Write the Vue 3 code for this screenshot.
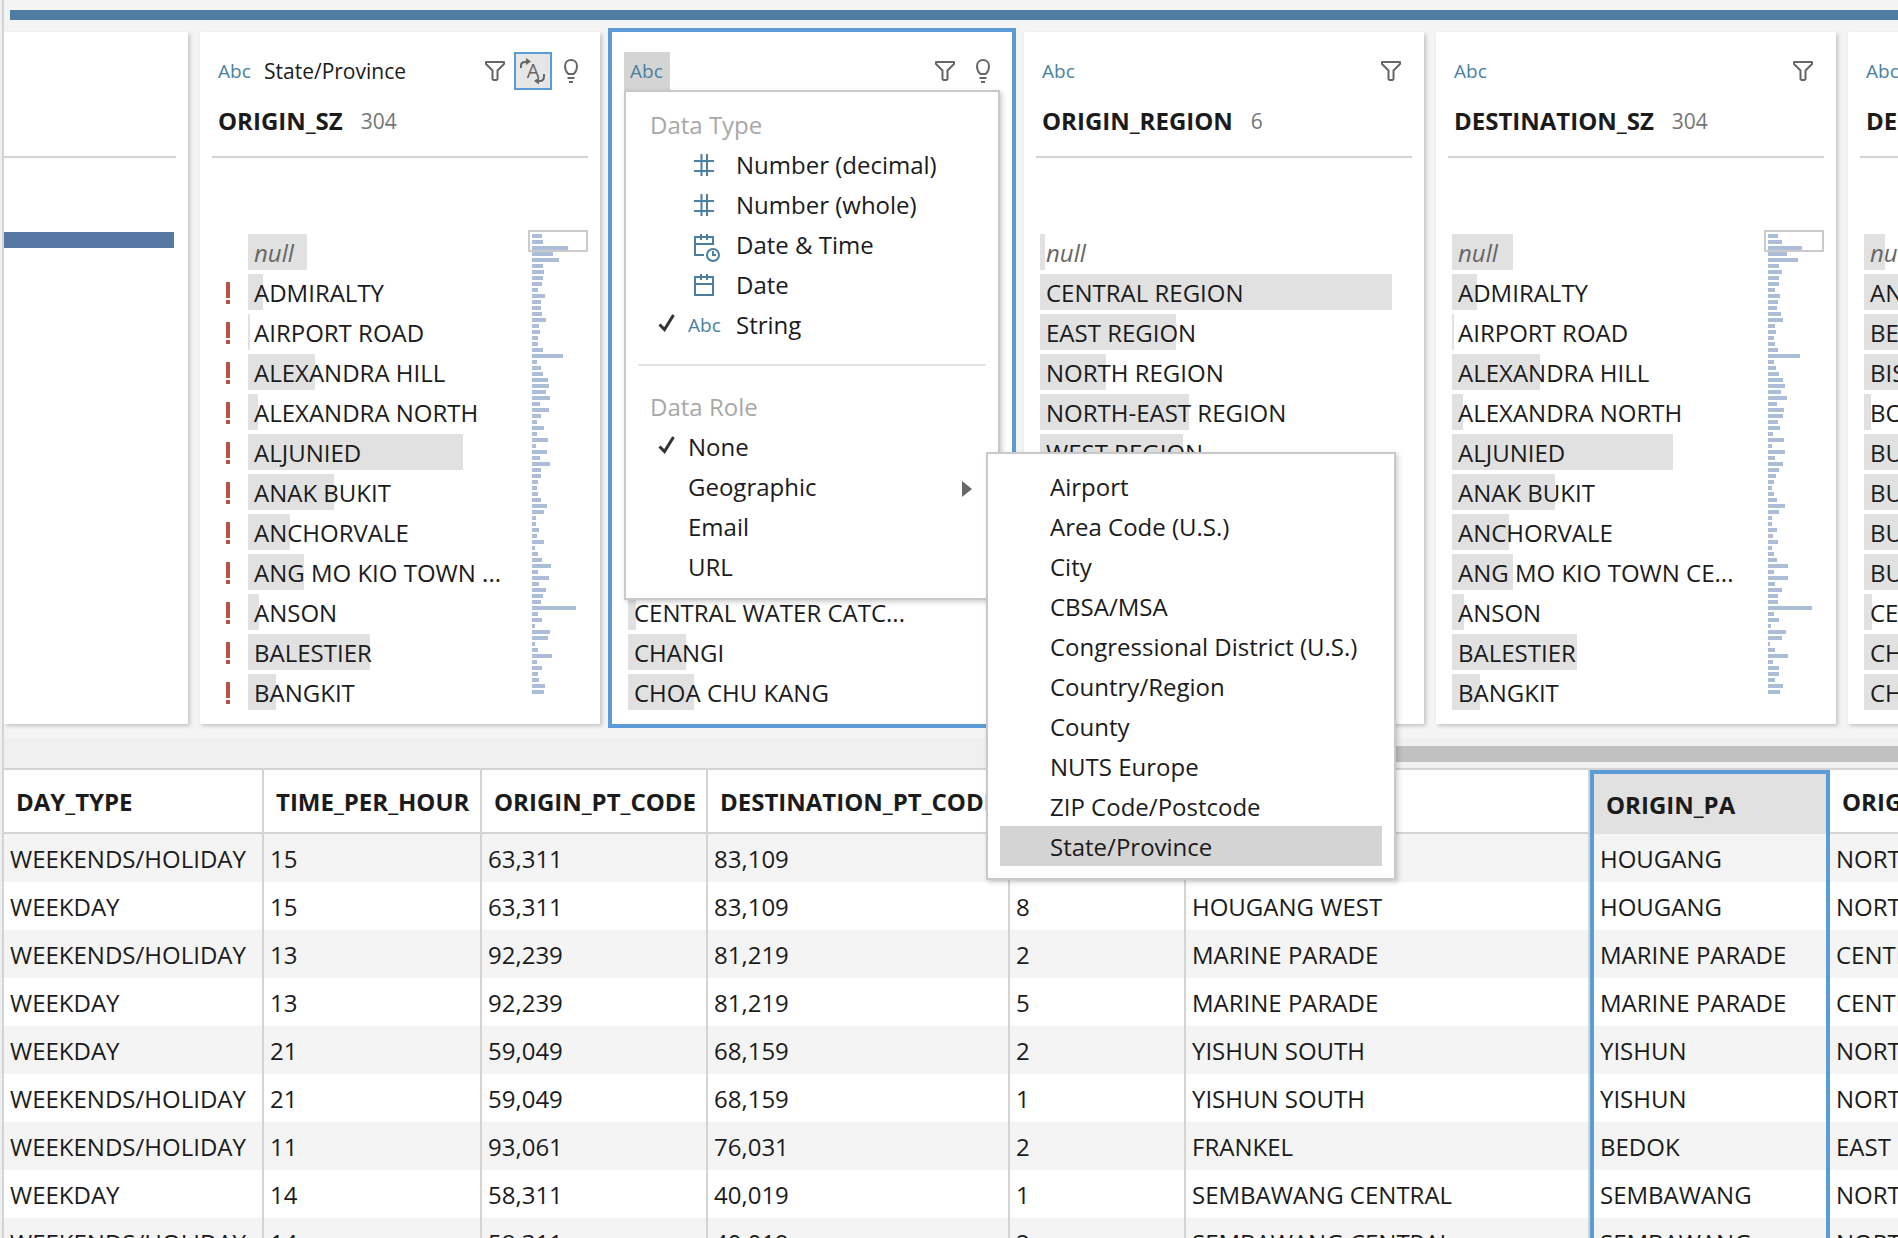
<script setup>
const originSz = [
  ['null', 59], ['ADMIRALTY', 15], ['AIRPORT ROAD', 2], ['ALEXANDRA HILL', 67],
  ['ALEXANDRA NORTH', 10], ['ALJUNIED', 215], ['ANAK BUKIT', 86], ['ANCHORVALE', 42],
  ['ANG MO KIO TOWN ...', 56], ['ANSON', 11], ['BALESTIER', 122], ['BANGKIT', 28],
]
const destinationSz = [
  ['null', 61], ['ADMIRALTY', 25], ['AIRPORT ROAD', 2], ['ALEXANDRA HILL', 88],
  ['ALEXANDRA NORTH', 11], ['ALJUNIED', 221], ['ANAK BUKIT', 103], ['ANCHORVALE', 57],
  ['ANG MO KIO TOWN CE...', 61], ['ANSON', 12], ['BALESTIER', 125], ['BANGKIT', 28],
]
const planningAreas = [
  ['null', 21], ['ANG MO KIO', 180], ['BEDOK', 260], ['BISHAN', 90], ['BOON LAY', 7],
  ['BUKIT BATOK', 120], ['BUKIT MERAH', 210], ['BUKIT PANJANG', 110], ['BUKIT TIMAH', 100],
  ['CENTRAL WATER CATC...', 8], ['CHANGI', 58], ['CHOA CHU KANG', 66],
]
const regions = [
  ['null', 5], ['CENTRAL REGION', 352], ['EAST REGION', 136], ['NORTH REGION', 66],
  ['NORTH-EAST REGION', 149], ['WEST REGION', 143],
]
const originMap = [
  10, 11, 36, 21, 27, 11, 12, 11, 10, 6, 13, 9, 9, 10, 14, 7, 8, 6, 6, 11, 31, 5, 9, 11, 16, 17,
  14, 18, 8, 17, 9, 5, 12, 5, 16, 4, 15, 8, 18, 9, 9, 6, 5, 6, 9, 15, 12, 4, 4, 7, 5, 12, 3, 6,
  10, 19, 6, 17, 7, 14, 11, 9, 44, 6, 10, 3, 18, 16, 3, 6, 20, 5, 10, 6, 7, 13, 12,
]
const destinationMap = [
  10, 14, 34, 19, 30, 11, 14, 11, 11, 7, 12, 10, 9, 13, 15, 7, 8, 6, 7, 10, 32, 6, 8, 11, 15, 17,
  13, 19, 9, 16, 15, 10, 12, 5, 16, 4, 17, 7, 15, 11, 8, 6, 4, 6, 9, 17, 11, 4, 4, 9, 5, 10, 4,
  6, 9, 20, 6, 20, 7, 14, 10, 10, 44, 6, 11, 3, 18, 14, 2, 7, 20, 5, 11, 11, 7, 15, 12,
]
const cards = [
  { name: 'ORIGIN_SZ', count: 304, role: 'State/Province', rows: originSz, map: originMap, flagged: true, tools: ['filter', 'changes', 'hint'] },
  { name: 'ORIGIN_PA', count: 55, rows: planningAreas, selected: true, tools: ['filter', 'hint'] },
  { name: 'ORIGIN_REGION', count: 6, rows: regions, tools: ['filter'] },
  { name: 'DESTINATION_SZ', count: 304, rows: destinationSz, map: destinationMap, tools: ['filter'] },
  { name: 'DESTINATION_PA', count: 55, rows: planningAreas, tools: ['filter'] },
]
const toolLabels = { filter: 'Filter values', changes: 'Data role changes', hint: 'Recommendations' }
const dataTypes = [
  { label: 'Number (decimal)', icon: 'number' },
  { label: 'Number (whole)', icon: 'number' },
  { label: 'Date & Time', icon: 'datetime' },
  { label: 'Date', icon: 'date' },
  { label: 'String', icon: 'string', checked: true },
]
const dataRoles = [
  { label: 'None', checked: true },
  {
    label: 'Geographic',
    children: ['Airport', 'Area Code (U.S.)', 'City', 'CBSA/MSA', 'Congressional District (U.S.)',
      'Country/Region', 'County', 'NUTS Europe', 'ZIP Code/Postcode', 'State/Province'],
  },
  { label: 'Email' },
  { label: 'URL' },
]
const columns = ['DAY_TYPE', 'TIME_PER_HOUR', 'ORIGIN_PT_CODE', 'DESTINATION_PT_CODE', 'TRIPS', 'ORIGIN_SZ', 'ORIGIN_PA', 'ORIGIN_REGION']
const records = [
  ['WEEKENDS/HOLIDAY', '15', '63,311', '83,109', '2', 'HOUGANG WEST', 'HOUGANG', 'NORTH-EAST REGION'],
  ['WEEKDAY', '15', '63,311', '83,109', '8', 'HOUGANG WEST', 'HOUGANG', 'NORTH-EAST REGION'],
  ['WEEKENDS/HOLIDAY', '13', '92,239', '81,219', '2', 'MARINE PARADE', 'MARINE PARADE', 'CENTRAL REGION'],
  ['WEEKDAY', '13', '92,239', '81,219', '5', 'MARINE PARADE', 'MARINE PARADE', 'CENTRAL REGION'],
  ['WEEKDAY', '21', '59,049', '68,159', '2', 'YISHUN SOUTH', 'YISHUN', 'NORTH REGION'],
  ['WEEKENDS/HOLIDAY', '21', '59,049', '68,159', '1', 'YISHUN SOUTH', 'YISHUN', 'NORTH REGION'],
  ['WEEKENDS/HOLIDAY', '11', '93,061', '76,031', '2', 'FRANKEL', 'BEDOK', 'EAST REGION'],
  ['WEEKDAY', '14', '58,311', '40,019', '1', 'SEMBAWANG CENTRAL', 'SEMBAWANG', 'NORTH REGION'],
  ['WEEKENDS/HOLIDAY', '14', '58,311', '40,019', '2', 'SEMBAWANG CENTRAL', 'SEMBAWANG', 'NORTH REGION'],
]
</script>

<template>
  <main class="workspace">
    <div class="step-bar"></div>

    <section class="profile">
      <article class="card card-partial">
        <div class="card-head"><div class="tools-row"></div><div class="title-row"></div></div>
        <div class="partial-bar"></div>
      </article>

      <article v-for="card in cards" :key="card.name" class="card" :class="{ selected: card.selected }">
        <header class="card-head">
          <div class="tools-row">
            <button type="button" class="type-button" :class="{ open: card.selected }" aria-label="Abc, change data type">Abc</button>
            <span v-if="card.role" class="role">{{ card.role }}</span>
            <div class="tools" :class="{ lone: card.tools.length === 1 }">
              <button v-for="tool in card.tools" :key="tool" type="button" class="tool" :class="{ active: tool === 'changes' }" :aria-label="toolLabels[tool]">
                <svg v-if="tool === 'filter'" width="20" height="20" viewBox="0 0 20 20" class="line-icon">
                  <path d="M1 1H19V3L12.5 9.5V18L11.5 19H8.5L7.5 18V9.5L1 3Z" />
                </svg>
                <svg v-else-if="tool === 'changes'" width="34" height="34" viewBox="0 0 34 34" class="line-icon">
                  <text x="17" y="24" text-anchor="middle" class="swap-letter">A</text>
                  <path d="M5 14V12Q5 8 9 8H11" />
                  <path d="M10 4L15 7.500L10 11Z" class="solid" />
                  <path d="M28 20V22Q28 27 24 27H22" />
                  <path d="M23 23.500L18 27L23 30.500Z" class="solid" />
                </svg>
                <svg v-else width="14" height="24" viewBox="0 0 14 24" class="line-icon">
                  <path d="M1 7C1 3.500 3.500 1 7 1S13 3.500 13 7C13 10.500 12 12.500 10.500 14L9.500 15H4.500L3.500 14C2 12.500 1 10.500 1 7Z" />
                  <path d="M3.500 19H10.500M5 23H9" />
                </svg>
              </button>
            </div>
          </div>
          <div class="title-row">
            <h2 class="field-name">{{ card.name }}</h2>
            <span class="count">{{ card.count }}</span>
          </div>
        </header>

        <div class="card-body" :class="{ flagged: card.flagged }">
          <ul class="values">
            <li v-for="([label, width]) in card.rows" :key="label" class="value">
              <svg v-if="card.flagged && label !== 'null'" class="flag" width="4" height="22" viewBox="0 0 4 22">
                <path d="M0 0H4V16H0ZM0 18H4V22H0Z" />
              </svg>
              <span class="value-bar" :style="{ width: width + 'px' }"></span>
              <span class="value-text" :class="{ missing: label === 'null' }">{{ label }}</span>
            </li>
          </ul>
          <div v-if="card.map" class="minimap">
            <span v-for="(width, i) in card.map" :key="i" class="map-bar" :style="{ width: width + 'px' }"></span>
            <span class="viewport"></span>
          </div>
        </div>

        <div v-if="card.selected" class="menu type-menu" role="menu">
          <p class="menu-heading">Data Type</p>
          <ul class="menu-list">
            <li v-for="item in dataTypes" :key="item.label">
              <button type="button" class="menu-item" role="menuitem">
                <span class="check-slot">
                  <svg v-if="item.checked" width="18" height="18" viewBox="0 0 18 18" class="check"><path d="M1.500 10.500L6.500 15.500L15.500 1" /></svg>
                </span>
                <span class="icon-slot">
                  <svg v-if="item.icon === 'number'" width="20" height="22" viewBox="0 0 20 22" class="type-icon">
                    <path d="M7.500 0V22M13 0V22M0 7H20M0 17H20" />
                  </svg>
                  <svg v-else-if="item.icon === 'date'" width="20" height="22" viewBox="0 0 20 22" class="type-icon">
                    <path d="M1 3H19V21H1ZM1 10H19M7 0V6M13 0V6" />
                  </svg>
                  <svg v-else-if="item.icon === 'datetime'" width="26" height="28" viewBox="0 0 26 28" class="type-icon datetime">
                    <path d="M10 21H1V3H19V11M1 10H19M7 0V6M13 0V6M19 17V21H22" />
                    <circle cx="19" cy="21" r="6" />
                  </svg>
                  <span v-else class="abc">Abc</span>
                </span>
                {{ item.label }}
              </button>
            </li>
          </ul>
          <hr class="divider" />
          <p class="menu-heading">Data Role</p>
          <ul class="menu-list">
            <li v-for="item in dataRoles" :key="item.label">
              <button type="button" class="menu-item" role="menuitem">
                <span class="check-slot">
                  <svg v-if="item.checked" width="18" height="18" viewBox="0 0 18 18" class="check"><path d="M1.500 10.500L6.500 15.500L15.500 1" /></svg>
                </span>
                {{ item.label }}
                <svg v-if="item.children" width="10" height="16" viewBox="0 0 10 16" class="arrow"><path d="M0 0L10 8L0 16Z" /></svg>
              </button>
              <div v-if="item.children" class="menu submenu" role="menu">
                <button v-for="child in item.children" :key="child" type="button" role="menuitem" class="menu-item sub-item" :class="{ hovered: child === 'State/Province' }">{{ child }}</button>
              </div>
            </li>
          </ul>
        </div>
      </article>
    </section>

    <div class="scroll-track"><div class="scroll-thumb"></div></div>

    <section class="grid">
      <table>
        <colgroup>
          <col v-for="(name, i) in columns" :key="name" :class="'col-' + i" />
        </colgroup>
        <thead>
          <tr>
            <th v-for="name in columns" :key="name" scope="col" :class="{ picked: name === 'ORIGIN_PA' }">{{ name }}</th>
          </tr>
        </thead>
        <tbody>
          <tr v-for="(record, r) in records" :key="r">
            <td v-for="(cell, c) in record" :key="c" :class="{ picked: columns[c] === 'ORIGIN_PA' }">{{ cell }}</td>
          </tr>
        </tbody>
      </table>
    </section>
  </main>
</template>

<style>
body {
  background: #f0f0f0;
}
</style>

<style scoped>
* {
  box-sizing: border-box;
}
.workspace {
  display: flex;
  flex-direction: column;
  height: 100vh;
  margin-left: 2px;
  border-left: 2px solid #d4d4d4;
  overflow: hidden;
  background: #f4f4f4;
  color: #1b1b1b;
  font-family: "Open Sans", "Noto Sans", sans-serif;
  font-size: 24px;
}
button {
  border: 0;
  background: none;
  font: inherit;
  color: inherit;
  cursor: pointer;
}
ul,
h2,
p {
  margin: 0;
  padding: 0;
  list-style: none;
}
.step-bar {
  flex: none;
  height: 10px;
  margin: 10px 0 0 6px;
  background: #4f7ca1;
}
.profile {
  display: flex;
  flex: none;
  gap: 12px;
  padding: 12px 0 14px;
}
.card {
  position: relative;
  flex: none;
  width: 400px;
  padding-bottom: 10px;
  background: #fff;
  box-shadow: 2px 2px 4px rgba(0, 0, 0, 0.2);
}
.card.selected {
  z-index: 2;
  box-shadow: 0 0 0 4px #5b9bd8;
}
.card-partial {
  width: 184px;
}
.card-partial .card-head {
  margin-left: 0;
}
.partial-bar {
  height: 16px;
  margin: 74px 14px 0 0;
  background: #5878a4;
}
.card-head {
  margin: 0 12px;
  padding-top: 20px;
  border-bottom: 2px solid #d4d4d4;
}
.tools-row {
  display: flex;
  align-items: center;
  height: 38px;
}
.type-button {
  width: 46px;
  height: 38px;
  padding: 0 6px;
  color: #4a7f9f;
  font-size: 19px;
  line-height: 38px;
  text-align: left;
}
.type-button.open {
  background: #d4d4d4;
}
.role {
  margin-left: 6px;
  font-size: 21px;
  line-height: 38px;
}
.tools {
  display: flex;
  margin: 0 -2px 0 auto;
}
.tools.lone {
  margin-right: 2px;
}
.tool {
  display: flex;
  align-items: center;
  justify-content: center;
  width: 38px;
  height: 38px;
  padding: 0;
}
.tool.active {
  border: 2px solid #5b9bd8;
  background: #e6e6e6;
}
.line-icon {
  fill: none;
  stroke: #666;
  stroke-width: 2;
  stroke-linejoin: round;
}
.line-icon .solid,
.swap-letter {
  fill: #666;
  stroke: none;
}
.swap-letter {
  font-size: 20px;
}
.title-row {
  display: flex;
  align-items: center;
  gap: 18px;
  height: 66px;
  padding: 0 6px 4px;
}
.field-name {
  font-size: 24px;
  font-weight: 700;
  line-height: 32px;
}
.count {
  color: #767676;
  font-size: 21px;
  line-height: 32px;
}
.card-body {
  display: flex;
  justify-content: space-between;
  padding: 76px 12px 0 16px;
}
.card-body.flagged {
  padding-left: 48px;
}
.values {
  min-width: 0;
}
.value {
  position: relative;
  height: 36px;
  margin-bottom: 4px;
  white-space: nowrap;
}
.value-bar {
  display: block;
  height: 36px;
  background: #e1e1e1;
}
.value-text {
  position: absolute;
  top: 0;
  left: 6px;
  line-height: 38px;
}
.value-text.missing {
  color: #666;
  font-style: italic;
}
.flag {
  position: absolute;
  top: 8px;
  left: -22px;
  fill: #bd5044;
}
.minimap {
  position: relative;
  width: 60px;
  padding-left: 4px;
}
.map-bar {
  display: block;
  height: 4px;
  margin-bottom: 2px;
  background: #abbdd7;
}
.viewport {
  position: absolute;
  top: -4px;
  left: 0;
  width: 60px;
  height: 22px;
  border: 2px solid #cbcbcb;
}
.menu {
  position: absolute;
  z-index: 3;
  padding: 12px;
  border: 2px solid #c9c9c9;
  background: #fff;
  box-shadow: 2px 2px 5px rgba(0, 0, 0, 0.2);
}
.type-menu {
  top: 58px;
  left: 12px;
  width: 376px;
}
.submenu {
  top: -14px;
  left: 100%;
  width: 410px;
}
.menu-heading {
  height: 40px;
  padding-left: 12px;
  color: #a8a8a8;
  line-height: 42px;
}
.menu-list li {
  position: relative;
}
.menu-item {
  display: flex;
  align-items: center;
  width: 100%;
  height: 40px;
  padding: 2px 0 0;
  line-height: 38px;
  text-align: left;
  white-space: nowrap;
}
.sub-item {
  padding-left: 50px;
}
.sub-item.hovered {
  background: #d4d4d4;
}
.check-slot {
  display: flex;
  align-items: center;
  width: 50px;
  padding: 0 0 4px 20px;
}
.check {
  fill: none;
  stroke: #333;
  stroke-width: 3;
}
.icon-slot {
  display: flex;
  align-items: center;
  width: 48px;
  height: 38px;
}
.type-icon {
  margin-left: 6px;
  fill: none;
  stroke: #4a7f9f;
  stroke-width: 2;
}
.type-icon.datetime {
  margin-top: 6px;
}
.abc {
  color: #4a7f9f;
  font-size: 19px;
}
.arrow {
  margin: 4px 14px 0 auto;
  fill: #666;
}
.divider {
  height: 2px;
  margin: 20px 0;
  border: 0;
  background: #e4e4e4;
}
.scroll-track {
  flex: none;
  height: 30px;
  padding-top: 8px;
  background: #f0f0f0;
}
.scroll-thumb {
  height: 16px;
  margin-left: 60%;
  background: #c1c1c1;
}
.grid {
  flex: 1;
  min-height: 0;
  overflow: hidden;
  border-top: 2px solid #d4d4d4;
  background: #fff;
}
table {
  width: 2130px;
  border-collapse: separate;
  border-spacing: 0;
  table-layout: fixed;
}
.col-0 { width: 260px; }
.col-1 { width: 218px; }
.col-2 { width: 226px; }
.col-3 { width: 302px; }
.col-4 { width: 176px; }
.col-5 { width: 404px; }
.col-6 { width: 240px; }
.col-7 { width: 304px; }
th,
td {
  overflow: hidden;
  border-right: 2px solid #d4d4d4;
  text-align: left;
  white-space: nowrap;
}
th {
  height: 64px;
  padding: 0 0 0 12px;
  border-bottom: 2px solid #d4d4d4;
  font-size: 24px;
  font-weight: 700;
}
td {
  height: 48px;
  padding: 2px 0 0 6px;
  line-height: 46px;
}
tbody tr:nth-child(odd) {
  background: #f4f4f4;
}
.picked {
  border-right: 4px solid #5b9bd8;
  border-left: 4px solid #5b9bd8;
}
th.picked {
  border-top: 4px solid #5b9bd8;
  border-bottom: 0;
  background: #e1e1e1;
}
</style>
